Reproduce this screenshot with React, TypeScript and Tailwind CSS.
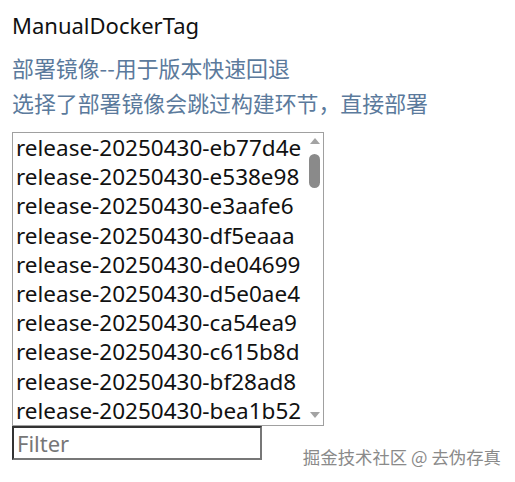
import React from "react";

const tags = [
  "release-20250430-eb77d4e",
  "release-20250430-e538e98",
  "release-20250430-e3aafe6",
  "release-20250430-df5eaaa",
  "release-20250430-de04699",
  "release-20250430-d5e0ae4",
  "release-20250430-ca54ea9",
  "release-20250430-c615b8d",
  "release-20250430-bf28ad8",
  "release-20250430-bea1b52",
];

export default function App() {
  return (
    <div className="w-[515px] h-[482px] bg-white px-3 pt-[10px] font-['Noto_Sans','Noto_Sans_CJK_SC',sans-serif] relative">
      <div className="text-[22px] leading-[30px] text-[#111]">ManualDockerTag</div>
      <div className="mt-[10px] text-[21.9px] leading-[35px] text-[#5b7a9c] font-['Noto_Sans_CJK_SC',sans-serif]">
        <p>部署镜像--用于版本快速回退</p>
        <p>选择了部署镜像会跳过构建环节，直接部署</p>
      </div>

      <div className="mt-[12px] w-[312px] h-[294px] border border-[#a0a0a0] flex">
        <div className="flex-1 overflow-hidden pl-[3px]">
          {tags.map((t) => (
            <div key={t} className="text-[22.5px] leading-[29.2px] text-[#111] whitespace-nowrap">
              {t}
            </div>
          ))}
        </div>
        <div className="w-[17px] flex flex-col items-center pt-[4px] pb-[6px]">
          <svg width="12" height="8" viewBox="0 0 12 8">
            <polygon points="6,1 11,7 1,7" fill="#a3a3a3" />
          </svg>
          <div className="mt-[9px] w-[11px] h-[34px] rounded-full bg-[#8a8a8a]" />
          <div className="flex-1" />
          <svg width="12" height="8" viewBox="0 0 12 8">
            <polygon points="1,1 11,1 6,7" fill="#a3a3a3" />
          </svg>
        </div>
      </div>

      <input
        placeholder="Filter"
        className="block w-[250px] h-[34px] border-2 border-t-[#333] border-l-[#333] border-b-[#777] border-r-[#777] px-[3px] text-[22px] leading-[30px] placeholder:text-[#777] outline-none"
      />

      <div className="absolute right-[14px] bottom-[13px] text-[17.4px] leading-[24px] text-[#8a8a8a] font-['Noto_Sans_CJK_SC',sans-serif] [text-shadow:0_0_2px_#fff]">
        掘金技术社区 @ 去伪存真
      </div>
    </div>
  );
}
